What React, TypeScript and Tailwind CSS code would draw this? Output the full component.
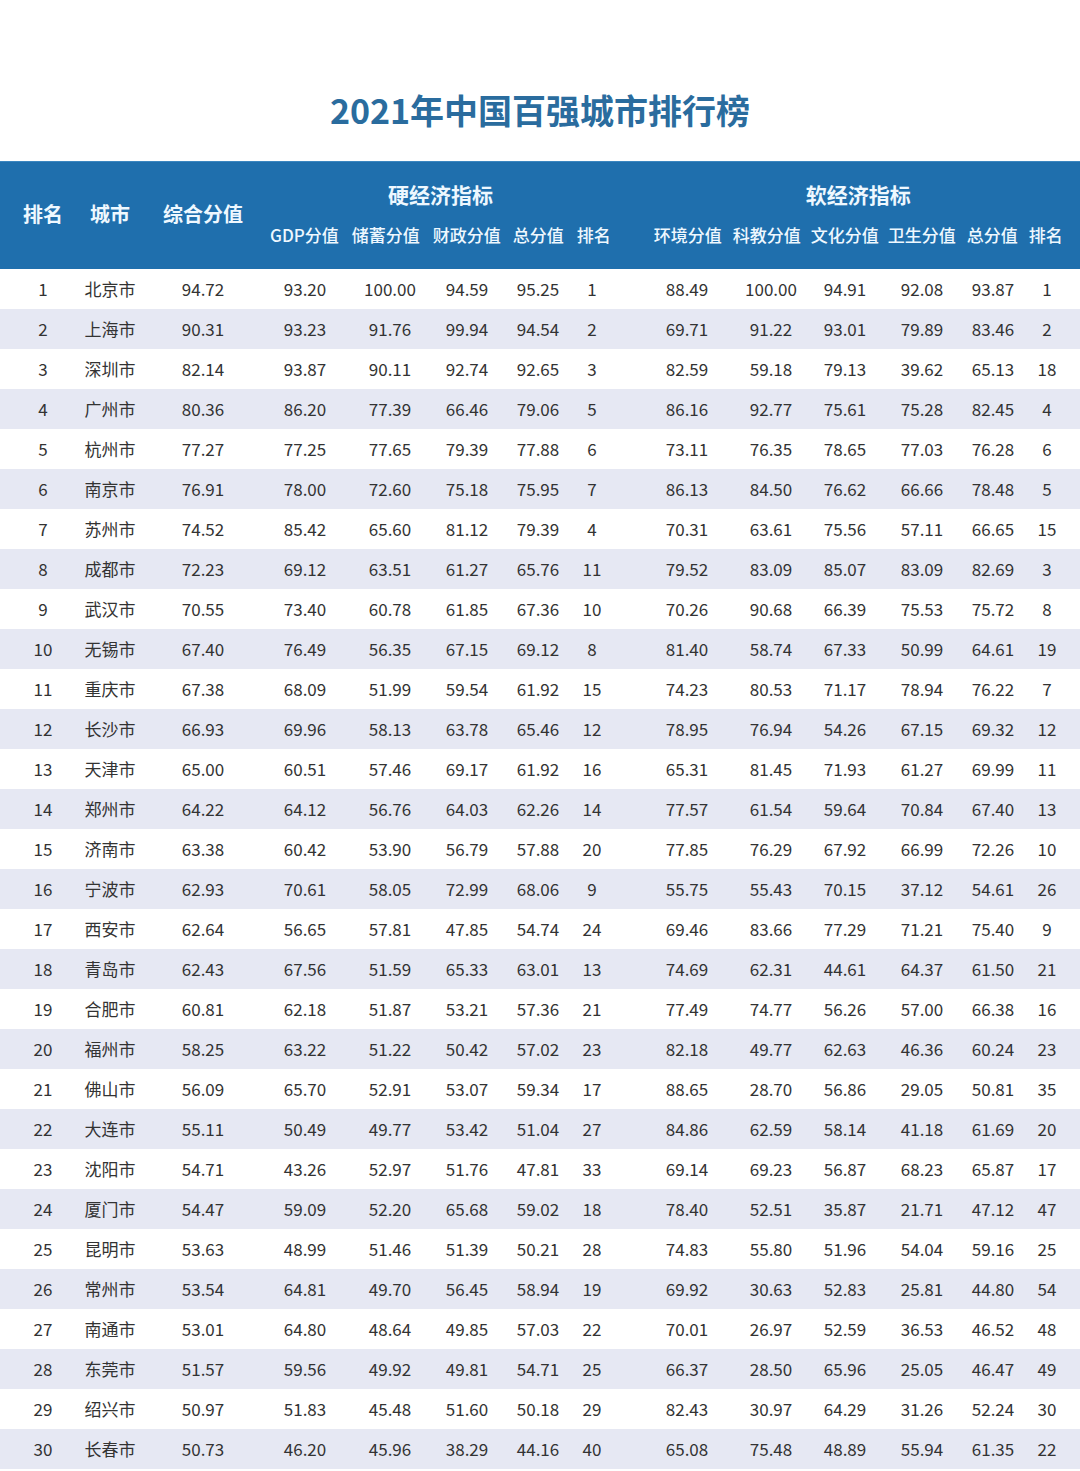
import React from 'react';

const ROWS = `1 北京市 94.72 93.20 100.00 94.59 95.25 1 88.49 100.00 94.91 92.08 93.87 1
2 上海市 90.31 93.23 91.76 99.94 94.54 2 69.71 91.22 93.01 79.89 83.46 2
3 深圳市 82.14 93.87 90.11 92.74 92.65 3 82.59 59.18 79.13 39.62 65.13 18
4 广州市 80.36 86.20 77.39 66.46 79.06 5 86.16 92.77 75.61 75.28 82.45 4
5 杭州市 77.27 77.25 77.65 79.39 77.88 6 73.11 76.35 78.65 77.03 76.28 6
6 南京市 76.91 78.00 72.60 75.18 75.95 7 86.13 84.50 76.62 66.66 78.48 5
7 苏州市 74.52 85.42 65.60 81.12 79.39 4 70.31 63.61 75.56 57.11 66.65 15
8 成都市 72.23 69.12 63.51 61.27 65.76 11 79.52 83.09 85.07 83.09 82.69 3
9 武汉市 70.55 73.40 60.78 61.85 67.36 10 70.26 90.68 66.39 75.53 75.72 8
10 无锡市 67.40 76.49 56.35 67.15 69.12 8 81.40 58.74 67.33 50.99 64.61 19
11 重庆市 67.38 68.09 51.99 59.54 61.92 15 74.23 80.53 71.17 78.94 76.22 7
12 长沙市 66.93 69.96 58.13 63.78 65.46 12 78.95 76.94 54.26 67.15 69.32 12
13 天津市 65.00 60.51 57.46 69.17 61.92 16 65.31 81.45 71.93 61.27 69.99 11
14 郑州市 64.22 64.12 56.76 64.03 62.26 14 77.57 61.54 59.64 70.84 67.40 13
15 济南市 63.38 60.42 53.90 56.79 57.88 20 77.85 76.29 67.92 66.99 72.26 10
16 宁波市 62.93 70.61 58.05 72.99 68.06 9 55.75 55.43 70.15 37.12 54.61 26
17 西安市 62.64 56.65 57.81 47.85 54.74 24 69.46 83.66 77.29 71.21 75.40 9
18 青岛市 62.43 67.56 51.59 65.33 63.01 13 74.69 62.31 44.61 64.37 61.50 21
19 合肥市 60.81 62.18 51.87 53.21 57.36 21 77.49 74.77 56.26 57.00 66.38 16
20 福州市 58.25 63.22 51.22 50.42 57.02 23 82.18 49.77 62.63 46.36 60.24 23
21 佛山市 56.09 65.70 52.91 53.07 59.34 17 88.65 28.70 56.86 29.05 50.81 35
22 大连市 55.11 50.49 49.77 53.42 51.04 27 84.86 62.59 58.14 41.18 61.69 20
23 沈阳市 54.71 43.26 52.97 51.76 47.81 33 69.14 69.23 56.87 68.23 65.87 17
24 厦门市 54.47 59.09 52.20 65.68 59.02 18 78.40 52.51 35.87 21.71 47.12 47
25 昆明市 53.63 48.99 51.46 51.39 50.21 28 74.83 55.80 51.96 54.04 59.16 25
26 常州市 53.54 64.81 49.70 56.45 58.94 19 69.92 30.63 52.83 25.81 44.80 54
27 南通市 53.01 64.80 48.64 49.85 57.03 22 70.01 26.97 52.59 36.53 46.52 48
28 东莞市 51.57 59.56 49.92 49.81 54.71 25 66.37 28.50 65.96 25.05 46.47 49
29 绍兴市 50.97 51.83 45.48 51.60 50.18 29 82.43 30.97 64.29 31.26 52.24 30
30 长春市 50.73 46.20 45.96 38.29 44.16 40 65.08 75.48 48.89 55.94 61.35 22`
  .split('\n')
  .map(line => line.trim().split(' '));

// width + left margin per column, so each cell is centred where the picture has it
const COLS = [
  'w-[60px] ml-[13px]',
  'w-[60px] ml-[7px]',
  'w-[80px] ml-[23px]',
  'w-[80px] ml-[22px]',
  'w-[72px] ml-[9px]',
  'w-[70px] ml-[6px]',
  'w-[60px] ml-[6px]',
  'w-[44px] ml-[2px]',
  'w-[80px] ml-[33px]',
  'w-[76px] ml-[6px]',
  'w-[72px] ml-0',
  'w-[72px] ml-[5px]',
  'w-[64px] ml-[3px]',
  'w-[44px] ml-0',
];

// sub headers sit a little tighter than the data columns
const HARD = [
  { t: 'GDP分值', m: 'ml-0' },
  { t: '储蓄分值', m: 'ml-[13px]' },
  { t: '财政分值', m: 'ml-[13px]' },
  { t: '总分值', m: 'ml-[12px]' },
  { t: '排名', m: 'ml-[13px]' },
];
const SOFT = [
  { t: '环境分值', m: 'ml-0' },
  { t: '科教分值', m: 'ml-[11px]' },
  { t: '文化分值', m: 'ml-[10px]' },
  { t: '卫生分值', m: 'ml-[9px]' },
  { t: '总分值', m: 'ml-[11px]' },
  { t: '排名', m: 'ml-[11px]' },
];

export default function App() {
  return (
    <div className="w-[1080px] bg-white" style={{ fontFamily: '"Noto Sans CJK SC", "Noto Sans", sans-serif' }}>
      {/* Title */}
      <div className="pt-[88px] pb-[29px] text-center">
        <h1 className="text-[34px] leading-[44px] font-bold text-[#2a6c9e]">2021年中国百强城市排行榜</h1>
      </div>

      {/* Header */}
      <div className="h-[108px] bg-[#1f6fad] border-t border-[#3b86c0] flex text-[#eef8ff]">
        <div className={`${COLS[0]} flex items-center justify-center pb-[3px] text-[20px] font-bold whitespace-nowrap`}>排名</div>
        <div className={`${COLS[1]} flex items-center justify-center pb-[3px] text-[20px] font-bold whitespace-nowrap`}>城市</div>
        <div className={`${COLS[2]} flex items-center justify-center pb-[3px] text-[20px] font-bold whitespace-nowrap`}>综合分值</div>

        <div className="ml-[27px] flex flex-col items-center pt-[17px]">
          <div className="h-[30px] leading-[30px] text-[21px] font-bold">硬经济指标</div>
          <div className="mt-[14px] flex h-[24px] items-center">
            {HARD.map((h, i) => (
              <div key={i} className={`${h.m} text-[17px] font-medium whitespace-nowrap`}>{h.t}</div>
            ))}
          </div>
        </div>

        <div className="ml-[43px] flex flex-col items-center pt-[17px]">
          <div className="h-[30px] leading-[30px] text-[21px] font-bold">软经济指标</div>
          <div className="mt-[14px] flex h-[24px] items-center">
            {SOFT.map((h, i) => (
              <div key={i} className={`${h.m} text-[17px] font-medium whitespace-nowrap`}>{h.t}</div>
            ))}
          </div>
        </div>
      </div>

      {/* Rows */}
      <div>
        {ROWS.map((row, r) => (
          <div key={r} className={`flex h-[40px] items-center text-[17px] text-[#333333] ${r % 2 === 1 ? 'bg-[#e6e8f3]' : 'bg-white'}`}>
            {row.map((cell, c) => (
              <div key={c} className={`${COLS[c]} text-center whitespace-nowrap`}>{cell}</div>
            ))}
          </div>
        ))}
      </div>
    </div>
  );
}
